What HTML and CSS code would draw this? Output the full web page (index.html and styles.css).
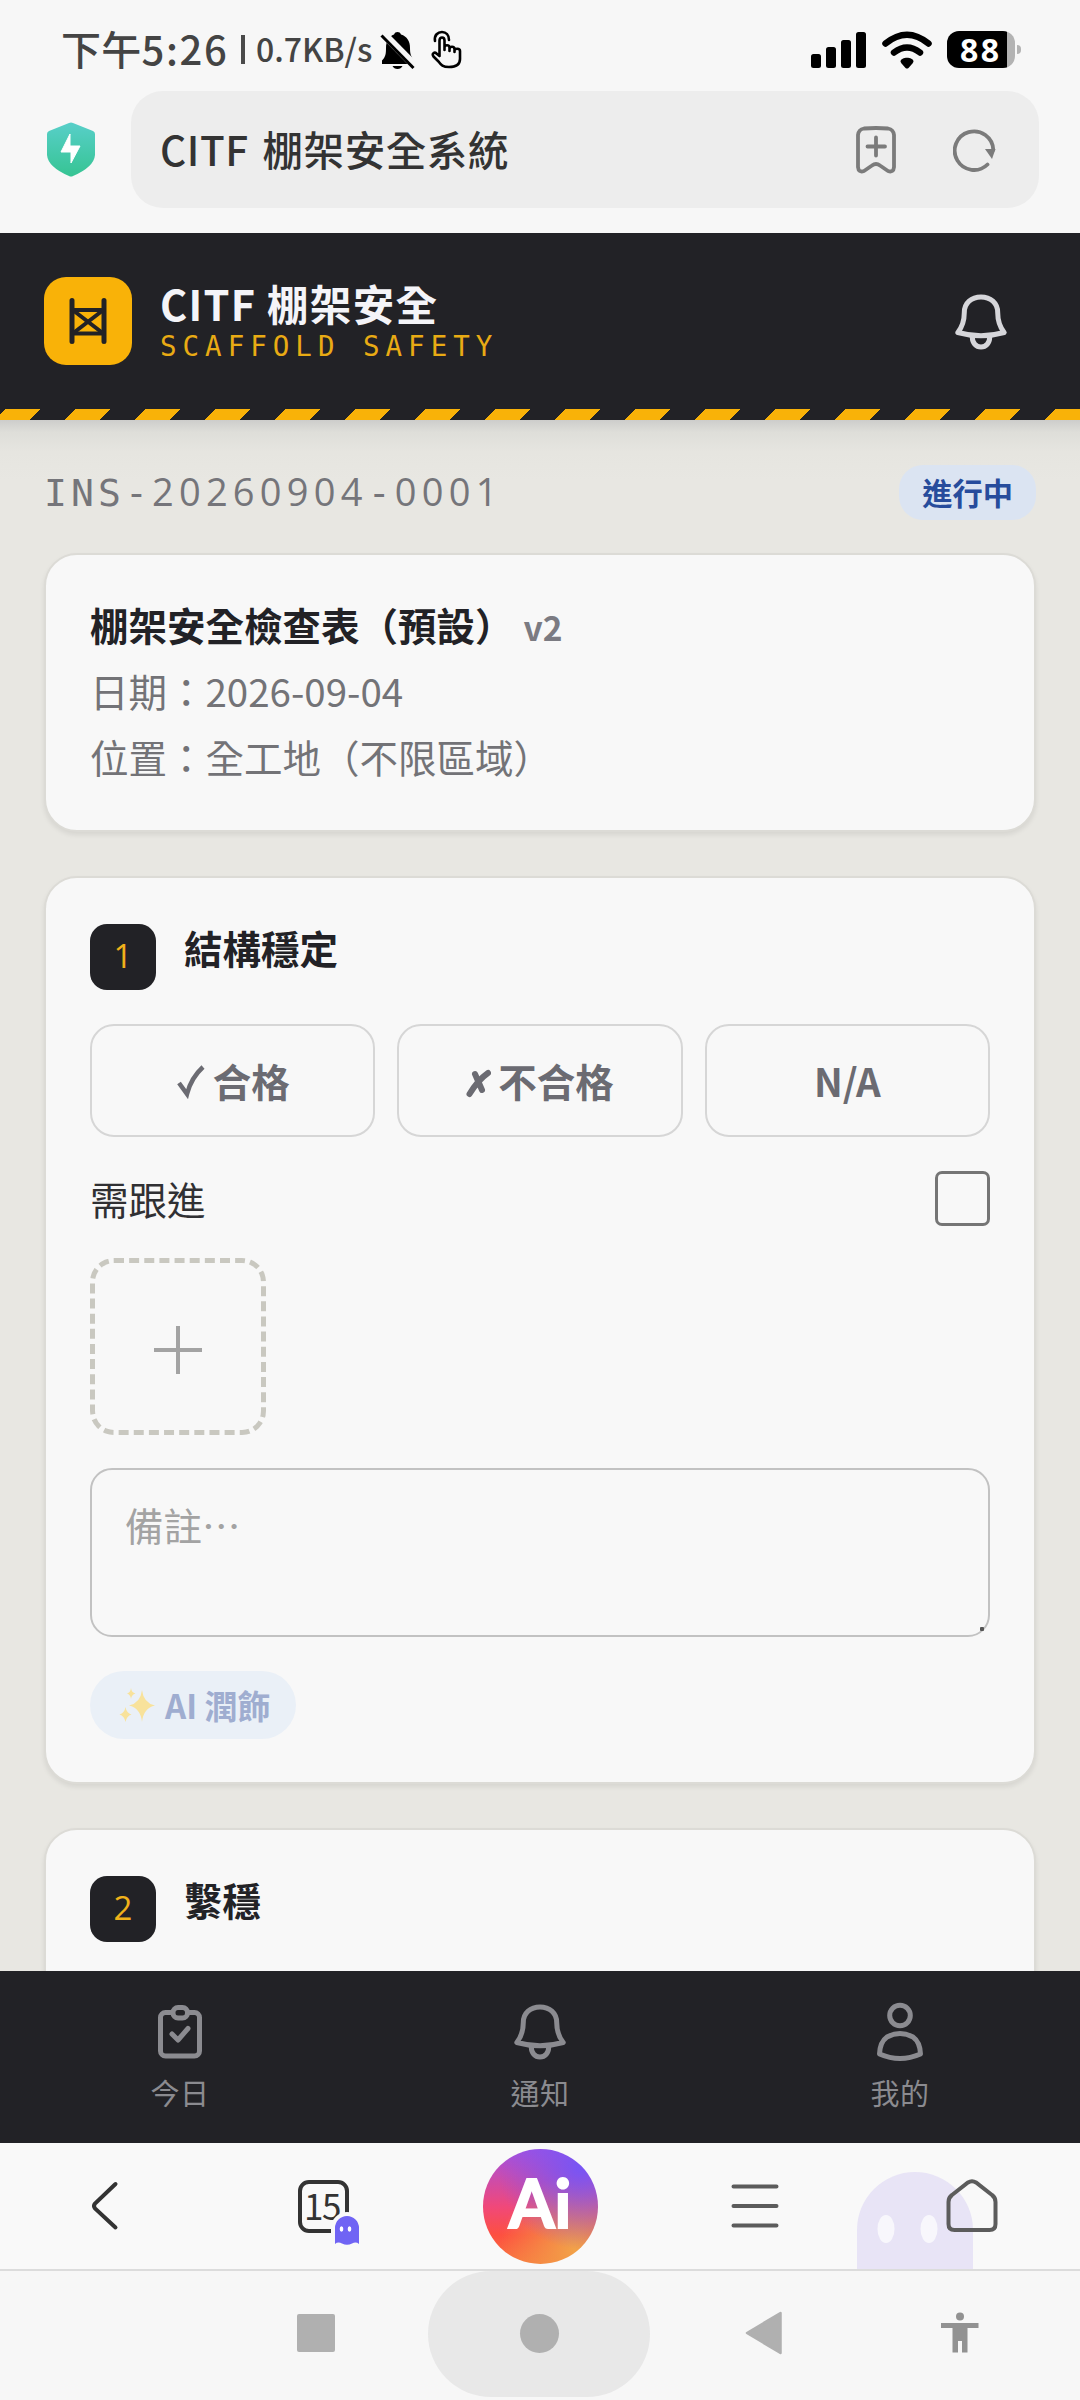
FILE: index.html
```html
<!DOCTYPE html>
<html lang="zh-Hant">
<head>
<meta charset="utf-8">
<title>CITF 棚架安全系統</title>
<link rel="stylesheet" href="styles.css">
</head>
<body>
<svg width="0" height="0" class="defs" aria-hidden="true">
  <symbol id="bell" viewBox="0 0 66 66">
    <path d="M9.8 42.5C15 36 16.300 29 16.300 22.500C16.300 13 23.500 7 33 7S49.700 13 49.700 22.500C49.700 29 51 36 56.200 42.500Q33 49 9.800 42.500Z"/>
    <path d="M24.300 47C24.300 53 28 57 33 57S41.700 53 41.700 47"/>
  </symbol>
</svg>
<div class="phone">
  <div class="status">
    <span class="clock">下午<span>5:26</span></span>
    <span class="divider"></span>
    <span class="speed">0.7KB/s</span>
    <svg class="mute" width="36" height="40" viewBox="0 0 36 40">
      <path d="M17.500 2C19 2 20.500 2.800 21 4.500C27 6.500 30 11 30 18C30 24 31 26.500 34 30.500V34H2V30.500C5.500 27 6 24 6 18C6 11 9 6.500 14 4.500C14.500 2.800 16 2 17.500 2Z" fill="#000"/>
      <path d="M12.500 36H22.500Q21 39 17.500 39T12.500 36Z" fill="#000"/>
      <path d="M3 3.500L35 36" stroke="#f7f7f7" stroke-width="8"/>
      <path d="M1.500 5.500L33.500 38" stroke="#000" stroke-width="3"/>
    </svg>
    <svg class="hand" width="32" height="40" viewBox="0 0 32 40" fill="none" stroke="#000" stroke-width="2.600" stroke-linecap="round" stroke-linejoin="round">
      <path d="M4 11C3 5 7 2 11 2S18 5 18 10"/>
      <path d="M8.500 26V10.500C8.500 6.500 13.500 6.500 13.500 10.500V20V17.500C13.500 14.500 18.500 14.500 18.500 17.500V21V19C18.500 16 23.500 16 23.500 19V22V20.500C23.500 18 29 18 29 21V29C29 34 25 37 18 37C12 37 10 35 7.500 31.500L2.500 26.500C0.500 23.500 3.500 21.500 5.500 23.500L8.500 26"/>
    </svg>
    <svg class="signal" width="56" height="38" viewBox="0 0 56 38">
      <rect x="0" y="23" width="10" height="14" rx="2.500"/><rect x="15" y="16" width="10" height="21" rx="2.500"/><rect x="30" y="9" width="10" height="28" rx="2.500"/><rect x="45" y="1" width="10" height="36" rx="2.500"/>
    </svg>
    <svg class="wifi" width="50" height="38" viewBox="0 0 50 38">
      <path d="M3.500 12.500Q25-5 46.500 12.500" fill="none" stroke="#000" stroke-width="6.500" stroke-linecap="round"/>
      <path d="M12 21.500Q25 11.500 38 21.500" fill="none" stroke="#000" stroke-width="6.500" stroke-linecap="round"/>
      <path d="M18.500 30.500C19 25.500 31 25.500 31.500 30.500Q31.500 31.500 26.500 37Q25 38 23.500 37Q18.500 31.500 18.500 30.500Z"/>
    </svg>
    <div class="battery"><span>88</span></div>
    <i class="nub"></i>
  </div>

  <div class="urlrow">
    <svg width="48" height="56" viewBox="0 0 48 56">
      <defs><linearGradient id="sh" x1="0" y1="0" x2="0" y2="1"><stop offset="0" stop-color="#58cfc9"/><stop offset="1" stop-color="#36c493"/></linearGradient></defs>
      <path d="M22 1Q24 0 26 1L46 9Q48 10 48 12V33Q47 45 26 54Q24 55 22 54Q1 45 0 33V12Q0 10 2 9Z" fill="url(#sh)"/>
      <path d="M23 12V24H33L24 41V30H14Z" fill="#fff" stroke="#fff" stroke-linejoin="round"/>
    </svg>
    <div class="urlbar">
      <span>CITF 棚架安全系統</span>
      <svg width="42" height="48" viewBox="0 0 42 48" fill="none" stroke="#7b7b7b" stroke-width="3.800" stroke-linecap="round" stroke-linejoin="round">
        <path d="M9 2.500Q21 1.500 33 2.500Q38.500 3.500 39 9V41Q38.500 47 33 45L25 39.500Q21 36.500 17 39.500L9 45Q3.500 47 3 41V9Q3.500 3.500 9 2.500Z"/>
        <path d="M21 11.500V29.500M12.500 20.500H30"/>
      </svg>
      <svg class="reload" width="44" height="44" viewBox="0 0 44 44">
        <path d="M34.500 36.500A19.300 19.300 0 1 1 40.300 22" fill="none" stroke="#7b7b7b" stroke-width="3.800" stroke-linecap="round"/>
        <path d="M32 21H42.500L39 31Z" fill="#7b7b7b"/>
      </svg>
    </div>
  </div>

  <header class="apphead">
    <div class="logo">
      <svg width="44" height="52" viewBox="0 0 44 52" fill="none" stroke="#222226" stroke-width="5" stroke-linecap="round">
        <path d="M6 5.500V46.500M38 5.500V46.500"/><path d="M6 15H38M6 38.500H38" stroke-width="4"/><path d="M8 16L36 37.500M36 16L8 37.500" stroke-width="4"/>
      </svg>
    </div>
    <div class="brand"><b>CITF 棚架安全</b><small>SCAFFOLD SAFETY</small></div>
    <svg class="headbell" width="66" height="66"><use href="#bell"/></svg>
  </header>
  <div class="hazard"></div>

  <main>
    <div class="idrow">
      <div class="insid">INS-<span>20260904</span>-<span>0001</span></div>
      <span class="state">進行中</span>
    </div>

    <section class="card summary">
      <h2>棚架安全檢查表（預設）<small>v2</small></h2>
      <p>日期：2026-09-04</p>
      <p>位置：全工地（不限區域）</p>
    </section>

    <section class="card item">
      <div class="itemhead"><span class="num">1</span><h3>結構穩定</h3></div>
      <div class="choices">
        <button><svg width="30" height="36" viewBox="0 0 30 36"><path d="M3 20L11 31Q15 15 27 4" fill="none" stroke="#6b6b72" stroke-width="4.500"/></svg>合格</button>
        <button><svg width="25" height="36" viewBox="0 0 25 36"><path d="M9 11L16 27M22 10Q12 17 3.500 31" fill="none" stroke="#6b6b72" stroke-width="6" stroke-linecap="round"/></svg>不合格</button>
        <button>N/A</button>
      </div>
      <label class="follow">需跟進<span class="check"></span></label>
      <div class="photo">
        <svg width="48" height="48" viewBox="0 0 48 48"><path d="M24 0V48M0 24H48" stroke="#a3a3a3" stroke-width="4"/></svg>
      </div>
      <div class="note"><span>備註⋯</span><i></i></div>
      <div class="polish">
        <svg width="37" height="37" viewBox="0 0 37 37" fill="#f8e29b">
          <path d="M23 3Q24.500 16 36 18.500Q24.500 21 23 35Q21.500 21 10 18.500Q21.500 16 23 3Z"/>
          <path d="M12 1Q12.500 5.500 16.500 6.500Q12.500 7.500 12 12Q11.500 7.500 8 6.500Q11.500 5.500 12 1Z"/>
          <path d="M6.500 20Q7.500 26 12.500 27.500Q7.500 29 6.500 35Q5.500 29 0.500 27.500Q5.500 26 6.500 20Z"/>
        </svg>
        <span>AI 潤飾</span>
      </div>
    </section>

    <section class="card item">
      <div class="itemhead"><span class="num">2</span><h3>繫穩</h3></div>
    </section>
  </main>

  <nav class="tabs">
    <div>
      <svg width="66" height="66" viewBox="0 0 66 66">
        <rect x="13.500" y="12.500" width="39" height="43.500" rx="5"/>
        <rect x="26" y="7.500" width="14.500" height="10.500" rx="5" fill="#222226"/>
        <path d="M25 34L31 40L41 28.500"/>
      </svg>今日
    </div>
    <div><svg width="66" height="66"><use href="#bell"/></svg>通知</div>
    <div>
      <svg width="66" height="66" viewBox="0 0 66 66">
        <circle cx="33" cy="15.500" r="10.300"/>
        <path d="M12.500 54Q13 42 20 37Q33 30 46 37Q53 42 53.500 54Q33 63 12.500 54Z"/>
      </svg>我的
    </div>
  </nav>

  <div class="browser">
    <div><svg width="30" height="52" viewBox="0 0 30 52"><path d="M25.500 4L5 23.500Q3 26 5 28.500L25.500 47.500" fill="none" stroke="#333" stroke-width="4" stroke-linecap="round"/></svg></div>
    <div class="count">
      <span>15</span>
      <svg width="26" height="30" viewBox="0 0 26 30"><path d="M1 29V13A12 12 0 0 1 25 13V29Q22 26.500 18 28.500Q13 31 8 28.500Q4 26.500 1 29Z" fill="#7064f4"/><ellipse cx="7.500" cy="14" rx="1.800" ry="2.800" fill="#fff"/><ellipse cx="15.500" cy="14" rx="1.800" ry="2.800" fill="#fff"/></svg>
    </div>
    <div class="ai"><span>Ai</span></div>
    <div><svg width="48" height="44" viewBox="0 0 48 44"><path d="M2.500 2.500H45.500M2.500 22H45.500M2.500 41.500H45.500" stroke="#5c5c5c" stroke-width="4" stroke-linecap="round"/></svg></div>
    <div class="home">
      <svg class="ghost" width="116" height="97" viewBox="0 0 116 97"><path d="M0 97V58A58 58 0 0 1 116 58V97Z" fill="#e8e4f6"/><ellipse cx="29" cy="57" rx="8.500" ry="14" fill="#f8f7fc"/><ellipse cx="72" cy="57" rx="8.500" ry="14" fill="#f8f7fc"/></svg>
      <svg width="52" height="54" viewBox="0 0 52 54"><path d="M22 3.500Q26 1 30 3.500L46 16Q49.500 18.500 49.500 23V45Q49.500 51 43.500 51H8.500Q2.500 51 2.500 45V23Q2.500 18.500 6 16Z" fill="none" stroke="#5c5c5c" stroke-width="4"/></svg>
    </div>
  </div>

  <div class="sysnav">
    <div><i class="square"></i></div>
    <div class="press"><i class="dot"></i></div>
    <div><svg width="38" height="44" viewBox="0 0 38 44"><path d="M35.500 2V42L2 22Z" fill="#b0b0b0" stroke="#b0b0b0" stroke-width="2.500" stroke-linejoin="round"/></svg></div>
    <svg class="person" width="38" height="42" viewBox="0 0 38 42" fill="#929292"><circle cx="19" cy="4.500" r="4"/><path d="M0 11H37.500V16H26.500V40.500H21V29H17V40.500H11.500V16H0Z"/></svg>
  </div>
</div>
</body>
</html>
```
FILE: styles.css
```css
* { box-sizing: border-box; }
body {
  margin: 0;
  font-family: "Noto Sans CJK TC", "Noto Sans", sans-serif;
  color: #222226;
}
h2, h3, p { margin: 0; }
svg { display: block; flex: none; }
.defs { position: absolute; }
.phone {
  width: 1080px;
  height: 2400px;
  display: flex;
  flex-direction: column;
  overflow: hidden;
  background: #f7f7f7;
}

/* Status bar */
.status {
  height: 91px;
  flex: none;
  display: flex;
  align-items: center;
  padding: 8px 59px 0 61px;
  color: #444;
  white-space: nowrap;
}
.clock { font-size: 40px; font-weight: 500; line-height: 56px; padding-bottom: 4px; width: 180px; letter-spacing: 0.3px; }
.clock span { letter-spacing: 1.6px; }
.divider { width: 4px; height: 29px; background: #4a4a4a; }
.speed { font-size: 32px; margin-left: 11px; width: 124px; font-weight: 500; line-height: 44px; padding-bottom: 3px; }
.hand { margin-left: 15px; }
.signal { margin-left: auto; }
.wifi { margin-left: 15px; }
.battery {
  width: 68px;
  height: 37px;
  margin-left: 15px;
  border-radius: 12px;
  background: linear-gradient(90deg, #000 60px, #b3b3b3 60px);
  color: #fff;
  font: 700 32px/37px "Open Sans", sans-serif;
  padding-left: 13px;
  letter-spacing: 2.5px;
}
.nub { width: 4px; height: 9px; margin-left: 2px; border-radius: 0 4px 4px 0; background: #b3b3b3; }

/* Address bar */
.urlrow {
  height: 142px;
  flex: none;
  display: flex;
  align-items: flex-start;
  padding: 0 41px 0 47px;
}
.urlrow > svg { margin-top: 31px; }
.urlbar {
  flex: 1;
  height: 117px;
  margin-left: 36px;
  border-radius: 32px;
  background: #ededed;
  display: flex;
  align-items: center;
  padding: 0 42px 0 29px;
}
.urlbar span { flex: 1; font-size: 40.500px; font-weight: 500; color: #333; letter-spacing: 0.6px; word-spacing: 4px; padding-bottom: 2px; }
.reload { margin-left: 56px; }

/* App header */
.apphead {
  height: 176px;
  flex: none;
  display: flex;
  align-items: flex-start;
  padding: 44px 66px 0 44px;
  background: #222226;
}
.logo {
  width: 88px;
  height: 88px;
  border-radius: 22px;
  background: #f9b208;
  display: flex;
  align-items: center;
  justify-content: center;
}
.brand { flex: 1; margin-left: 28px; }
.brand b { display: block; color: #f4f4f8; font-size: 41.500px; line-height: 52px; letter-spacing: 1.300px; }
.brand small {
  display: block;
  color: #e9ab14;
  font: 27.5px/35px "DejaVu Sans Mono", monospace;
  letter-spacing: 6px;
}
.headbell { margin-top: 13px; fill: none; stroke: #d6d6da; stroke-width: 5; stroke-linejoin: round; }
.hazard {
  height: 11px;
  flex: none;
  background: repeating-linear-gradient(-45deg, #f9b208 0 24.75px, #222226 24.75px 49.5px);
}

/* Page content */
main {
  height: 1551px;
  flex: none;
  overflow: hidden;
  padding: 0 44px;
  background: linear-gradient(#cdcdcb, #deded9 12px, #e6e5e0 32px, #e8e7e2 60px);
}
.idrow {
  display: flex;
  align-items: center;
  justify-content: space-between;
  padding: 44px 0 33px;
  height: 133px;
}
.insid { font: 38px/55px "DejaVu Sans Mono", monospace; letter-spacing: 4.100px; color: #75757a; }
.insid span { font-family: "Open Sans", sans-serif; letter-spacing: 5.250px; }
.state {
  padding: 0 23px 0 23px;
  border-radius: 24px;
  background: #dbe4f2;
  color: #274c9c;
  font-size: 30.25px;
  font-weight: 700;
  line-height: 55px;
}
.card {
  border: 2px solid #dcdbd6;
  border-radius: 33px;
  background: #f8f8f8;
  box-shadow: 0 3px 5px rgba(0, 0, 0, 0.08);
  padding: 44px;
}
.card + .card { margin-top: 44px; }
.summary { height: 279px; padding-top: 38px; }
.summary h2 { font-size: 38.5px; line-height: 63px; display: flex; align-items: baseline; white-space: nowrap; }
.summary small { font-size: 33.500px; font-weight: 700; color: #7b7b82; margin-left: 10px; }
.summary p { font-size: 38.5px; line-height: 66px; color: #737377; font-weight: 400; position: relative; top: -1px; }
.item { height: 908px; }
.itemhead { display: flex; height: 68px; margin-top: 2px; }
.num {
  width: 66px;
  height: 66px;
  border-radius: 17px;
  background: #222226;
  color: #f0b21a;
  font: 33px/64px "Open Sans", sans-serif;
  text-align: center;
}
.itemhead h3 { margin-left: 28px; font-size: 38.5px; line-height: 46px; }
.choices { display: grid; grid-template-columns: repeat(3, 1fr); gap: 22px; margin-top: 32px; }
.choices button {
  height: 113px;
  border: 2px solid #d6d6d6;
  border-radius: 24px;
  background: transparent;
  font: 700 38.5px/1 "Noto Sans CJK TC", sans-serif;
  color: #6b6b72;
  display: flex;
  align-items: center;
  justify-content: center;
  gap: 7px;
}
.follow {
  display: flex;
  align-items: center;
  justify-content: space-between;
  height: 56px;
  margin-top: 33px;
  font-size: 38.5px;
  line-height: 54px;
  color: #303033;
}
.check { width: 55px; height: 55px; border: 3px solid #757575; border-radius: 7px; }
.photo {
  width: 176px;
  height: 177px;
  margin-top: 32px;
  border: 5px dashed #c9c8c0;
  border-radius: 24px;
  display: flex;
  align-items: center;
  justify-content: center;
  padding-top: 6px;
}
.note {
  height: 169px;
  margin-top: 33px;
  border: 2px solid #c2c2c2;
  border-radius: 22px;
  padding: 24px 4px 4px 33px;
  display: flex;
  justify-content: space-between;
  font-size: 38.5px;
  line-height: 60px;
  color: #a3a3a3;
}
.note i { width: 4px; height: 4px; align-self: flex-end; border-radius: 1px; background: #555; }
.polish {
  width: 206px;
  height: 68px;
  margin-top: 34px;
  border-radius: 34px;
  background: #eaf0f7;
  display: flex;
  align-items: center;
  padding-left: 29px;
  gap: 9px;
  color: #9fadd0;
  font-size: 33px;
  font-weight: 700;
  white-space: nowrap;
}

/* Bottom app tabs */
.tabs {
  height: 172px;
  flex: none;
  display: grid;
  grid-template-columns: repeat(3, 1fr);
  background: #222226;
  color: #8b8b90;
  font-size: 29px;
  letter-spacing: 0.5px;
  line-height: 44px;
}
.tabs div { display: flex; flex-direction: column; align-items: center; padding-top: 29px; }
.tabs svg { fill: none; stroke: #8b8b90; stroke-width: 5; stroke-linejoin: round; stroke-linecap: round; margin-bottom: 4px; }

/* Browser toolbar */
.browser {
  height: 128px;
  flex: none;
  display: grid;
  grid-template-columns: 209px 228px 206px 224px 209px;
  align-items: center;
  justify-items: center;
  border-bottom: 2px solid #dcdcdc;
  background: #f9f9f9;
}
.count {
  position: relative;
  width: 51px;
  height: 53px;
  border: 4px solid #333;
  border-radius: 11px;
  color: #333;
  font: 400 35px/41px "Noto Sans CJK TC", sans-serif;
  text-align: center;
}
.count span { margin-left: -2px; letter-spacing: -1.500px; }
.count svg { position: absolute; right: -15px; bottom: -16px; background: #f9f9f9; border-radius: 13px 13px 0 0; box-shadow: 0 0 0 3px #f9f9f9; }
.ai {
  width: 115px;
  height: 115px;
  border-radius: 50%;
  background: radial-gradient(circle at 85% 15%, #7755f5, rgba(119, 85, 245, 0) 60%), radial-gradient(circle at 80% 88%, #f2a248, rgba(242, 162, 72, 0) 55%), linear-gradient(#a850dc 2%, #f0487a 50%, #fd5040 75%, #f87540);
  color: #fff;
  font: 700 66px/107px Lato, sans-serif;
  text-align: center;
  -webkit-text-stroke: 2px #fff;
}
.home { position: relative; height: 126px; display: flex; align-items: center; }
.home svg { position: relative; }
.home .ghost { position: absolute; left: -89px; bottom: 0; }

/* System navigation */
.sysnav {
  height: 129px;
  flex: none;
  display: grid;
  grid-template-columns: 222px 222px 228px 174px;
  padding-left: 206px;
  align-items: start;
}
.sysnav > div { display: flex; justify-content: center; align-items: center; height: 126px; padding-bottom: 2px; }
.sysnav > div:first-child { justify-content: flex-start; padding-left: 91px; }
.sysnav .press { border-radius: 63px; background: #e8e8e8; }
.square { width: 38px; height: 38px; border-radius: 2px; background: #b0b0b0; }
.dot { width: 39px; height: 39px; border-radius: 50%; background: #b0b0b0; }
.sysnav .person { margin: 41px 0 0 63px; }
```
